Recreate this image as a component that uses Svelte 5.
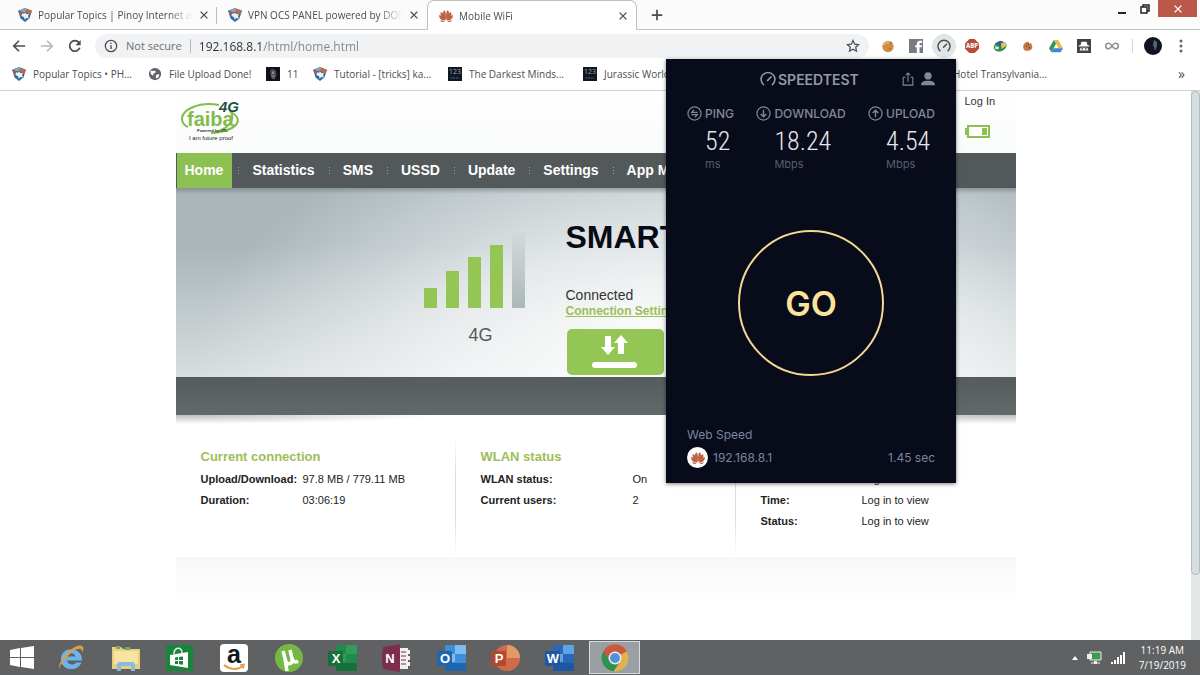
<script lang="ts">
    type Bookmark = { icon: string; label: string; width: number };

    let address = '192.168.8.1/html/home.html';

    const tabs = [
        { icon: 'cube', title: 'Popular Topics | Pinoy Internet and Technology', active: false },
        { icon: 'cube', title: 'VPN OCS PANEL powered by DOPE', active: false },
        { icon: 'huawei', title: 'Mobile WiFi', active: true },
    ];
    const extensions = ['cookie', 'facebook', 'gauge', 'abp', 'idm', 'cookiebite', 'drive', 'incognito', 'infinity'];
    const bookmarks: Bookmark[] = [
        { icon: 'cube', label: 'Popular Topics • PH...', width: 136 },
        { icon: 'globe', label: 'File Upload Done!', width: 118 },
        { icon: 'poster', label: '11', width: 47 },
        { icon: 'cube', label: 'Tutorial - [tricks] ka...', width: 135 },
        { icon: 'film', label: 'The Darkest Minds...', width: 135 },
        { icon: 'film', label: 'Jurassic World...', width: 349 },
        { icon: 'film', label: 'Hotel Transylvania...', width: 135 },
    ];
    const menu = ['Home', 'Statistics', 'SMS', 'USSD', 'Update', 'Settings', 'App Manager'];
    const bars = [20, 37, 51, 63, 76];
    const panels = [
        { title: 'Current connection', labelWidth: 102, rows: [['Upload/Download:', '97.8 MB / 779.11 MB'], ['Duration:', '03:06:19']] },
        { title: 'WLAN status', labelWidth: 152, rows: [['WLAN status:', 'On'], ['Current users:', '2']] },
        { title: 'Internet status', labelWidth: 101, rows: [['Network:', 'Log in to view'], ['Time:', 'Log in to view'], ['Status:', 'Log in to view']] },
    ];
    const results = [
        { icon: 'ping', label: 'PING', value: '52', unit: 'ms' },
        { icon: 'down', label: 'DOWNLOAD', value: '18.24', unit: 'Mbps' },
        { icon: 'up', label: 'UPLOAD', value: '4.54', unit: 'Mbps' },
    ];
    const apps = ['ie', 'explorer', 'store', 'amazon', 'utorrent', 'excel', 'onenote', 'outlook', 'powerpoint', 'word', 'chrome'];
    const office: Record<string, { letter: string; dark: string; mid: string; light: string }> = {
        excel: { letter: 'X', dark: '#17703c', mid: '#1f8c4c', light: '#2f9c5a' },
        onenote: { letter: 'N', dark: '#7b2f4c', mid: '#7b2f4c', light: '#f4f0f1' },
        outlook: { letter: 'O', dark: '#1f66ae', mid: '#3d8fd6', light: '#7dbdf0' },
        powerpoint: { letter: 'P', dark: '#b5472f', mid: '#cf6a4c', light: '#e39a62' },
        word: { letter: 'W', dark: '#1f56a3', mid: '#2b66b8', light: '#5ea3e2' },
    };
</script>

{#snippet icon(name: string, size = 14)}
    <svg width={size} height={size} viewBox="0 0 16 16" aria-hidden="true">
        {#if name === 'cube'}
            <path d="M0 3l8-3 8 3-3 9-5 4-5-4z" fill="#2f6ba6" />
            <path d="M1 3l7-3 3 2-4 3z" fill="#8fa3b5" />
            <path d="M9 1l7 2-2 4-5-2z" fill="#c96a30" />
            <path d="M4 6l3 .5L8 5l2 2 2.500-.5-1 3 1 2.500-3-.5-2 2-.5-3L4 9z" fill="#f3efe8" />
            <path d="M1 4l3.500 1v3L2 8z" fill="#c35a32" />
        {:else if name === 'huawei'}
            <g fill="#bd6243">
                <path d="M7.700 12.500C4 8 3.800 3.500 6 1.500 8 2.500 8.200 8 7.700 12.500z" />
                <path d="M8.300 12.500C12 8 12.200 3.500 10 1.500 8 2.500 7.800 8 8.300 12.500z" />
                <path d="M7.200 13C2.500 10.500 1 6.500 2.200 3.300 5 4 7 9 7.200 13z" />
                <path d="M8.800 13c4.700-2.500 6.200-6.500 5-9.700C11 4 9 9 8.800 13z" />
                <path d="M6.800 13.500C2 13.500-.2 10 .2 6.800 3.500 7.500 6 11 6.800 13.500z" />
                <path d="M9.200 13.500c4.800 0 7-3.500 6.600-6.700-3.300.7-5.800 4.200-6.600 6.700z" />
                <path d="M6.500 14c-2 1.500-4.500.8-5.300-1.200zM9.500 14c2 1.500 4.500.8 5.300-1.200z" />
            </g>
        {:else if name === 'globe'}
            <circle cx="8" cy="8" r="7" fill="#5f6368" />
            <path d="M3 4c2 0 3 1 5 0l1 2-3 2v2L3 8zM9 9l4-1-1 4-3 1z" fill="#fff" />
        {:else if name === 'poster'}
            <path d="M0 0h16v16H0z" fill="#101018" />
            <path d="M5 3l3-1 3 2 1 5-2 5H7L5 9z" fill="#554860" />
            <path d="M7 5h2v3H7zM6 10h4v1H6z" fill="#9c8b9e" />
        {:else if name === 'film'}
            <path d="M0 0h16v16H0z" fill="#111722" />
            <text x="8" y="8" text-anchor="middle" font-size="8" fill="#9aa5b5">123</text>
            <path d="M3 12.500h10" stroke="#66738a" stroke-dasharray="2 1" />
        {:else if name === 'cookie'}
            <circle cx="8" cy="8.500" r="6.500" fill="#cf8d45" />
            <path d="M3 7c1-3 4-4 7-3" fill="none" stroke="#e9b877" stroke-width="2" />
            <circle cx="11" cy="4" r="1" fill="#8b5a28" /><circle cx="10" cy="11" r="1" fill="#a96c31" />
        {:else if name === 'facebook'}
            <path d="M0 0h16v16H0z" fill="#777b84" />
            <path d="M9 16V9.500H7V7h2V5.500C9 3.200 10.400 2 12.500 2H15v2.500h-1.800c-.9 0-1.200.4-1.200 1.200V7h3l-.5 2.500H12V16z" fill="#fff" />
        {:else if name === 'gauge'}
            <path d="M4 14A6.900 6.900 0 1 1 12 14" fill="none" stroke="currentColor" stroke-width="1.600" />
            <path d="M7.500 9.500L11 6" stroke="currentColor" stroke-width="1.700" stroke-linecap="round" />
        {:else if name === 'abp'}
            <path d="M5 0h6l5 5v6l-5 5H5l-5-5V5z" fill="#b64c37" />
            <text x="8" y="10.500" text-anchor="middle" font-size="7" font-weight="700" fill="#fff">ABP</text>
        {:else if name === 'idm'}
            <ellipse cx="8" cy="8.500" rx="7.500" ry="5.500" fill="#2f8b50" transform="rotate(-20 8 8)" />
            <path d="M2 5l6-3 5 2-5 4z" fill="#315f9b" />
            <path d="M9 5l5-2 1 5-5 3z" fill="#e2c65a" />
            <path d="M3 8l4 1-1 3-4-1z" fill="#d8ecdf" />
        {:else if name === 'cookiebite'}
            <path d="M2.500 9c0-4 3-6 6-6l1 2.500 2-1 1.500 4c0 3.500-2.500 5-5.500 5s-5-1.500-5-4.500z" fill="#c57848" />
            <path d="M6 8h1M9 10h1M8 6h1" stroke="#6f391c" stroke-width="1.500" />
        {:else if name === 'drive'}
            <path d="M5.500 1h5L16 10.500h-5z" fill="#e9ba43" />
            <path d="M5.500 1L8 5.500 2.700 15 0 10.500z" fill="#2d9855" />
            <path d="M5.300 10.500H16L13.300 15H2.700z" fill="#4384d6" />
        {:else if name === 'incognito'}
            <path d="M0 0h16v16H0z" fill="#3f4347" />
            <path d="M5 3h6l1 4H4zM2 7h12v1.500H2zM4 10h8l1 3H3z" fill="#fff" />
            <path d="M5 10.500h2v1.500H5zM9 10.500h2v1.500H9z" fill="#3f4347" />
        {:else if name === 'infinity'}
            <path d="M8 8C6.500 6 5.500 4.800 4 4.800a3.200 3.200 0 0 0 0 6.400c1.500 0 2.500-1.200 4-3.200s2.500-3.200 4-3.200a3.200 3.200 0 0 1 0 6.400c-1.500 0-2.500-1.200-4-3.200z" fill="none" stroke="#8e9194" stroke-width="1.800" />
        {:else if name === 'back' || name === 'forward'}
            <path d={name === 'back' ? 'M15 8H2M8 2L2 8l6 6' : 'M1 8h13M8 2l6 6-6 6'} fill="none" stroke="currentColor" stroke-width="1.900" />
        {:else if name === 'reload'}
            <path d="M13.500 10A6 6 0 1 1 12.500 4" fill="none" stroke="currentColor" stroke-width="2" />
            <path d="M14.500 1v6h-6z" fill="currentColor" />
        {:else if name === 'info'}
            <circle cx="8" cy="8" r="6.500" fill="none" stroke="currentColor" stroke-width="1.400" />
            <path d="M8 7v4.500M8 4.300v1.500" stroke="currentColor" stroke-width="1.600" />
        {:else if name === 'star'}
            <path d="M8 1.800l1.900 4.100 4.500.5-3.300 3 .9 4.500L8 11.600l-4 2.300.9-4.500-3.300-3 4.500-.5z" fill="none" stroke="currentColor" stroke-width="1.400" />
        {:else if name === 'close'}
            <path d="M3.500 3.500l9 9M12.500 3.500l-9 9" stroke="currentColor" stroke-width="1.800" />
        {:else if name === 'plus'}
            <path d="M8 2v12M2 8h12" stroke="currentColor" stroke-width="2" />
        {:else if name === 'share'}
            <path d="M5 6H2.500v9h11V6H11M8 11V1M5.500 3.500L8 1l2.500 2.500" fill="none" stroke="currentColor" stroke-width="1.200" />
        {:else if name === 'user'}
            <circle cx="8" cy="4.500" r="4.200" fill="currentColor" />
            <path d="M0 15c0-3.500 2.500-5 8-5s8 1.500 8 5z" fill="currentColor" />
        {:else if name === 'ping' || name === 'down' || name === 'up'}
            <circle cx="8" cy="8" r="7" fill="none" stroke="currentColor" stroke-width="1.300" />
            {#if name === 'ping'}
                <path d="M11.500 6.700H5L7.500 4M4.500 9.300H11L8.500 12" fill="none" stroke="currentColor" stroke-width="1.300" />
            {:else}
                <path d={name === 'down' ? 'M8 4v7.500M5 8.500l3 3 3-3' : 'M8 12V4.500M5 7.500l3-3 3 3'} fill="none" stroke="currentColor" stroke-width="1.500" />
            {/if}
        {/if}
    </svg>
{/snippet}

{#snippet appIcon(name: string)}
    <svg width="30" height="30" viewBox="0 0 30 30" aria-hidden="true">
        {#if name === 'ie'}
            <path d="M26 17.500H11c.5 4.500 7 5.500 9 2h5.500C22 29 5 28.500 5 16S24 3 26 15z" fill="#6bb5ea" />
            <path d="M11 13.500h8.500c-.5-4.500-8-4.500-8.500 0z" fill="#5f6162" />
            <path d="M4 27C-2 20 22-4 27 4c1 2 0 4-1 5 0-6-8-3-14 4S2 24 4 27z" fill="#dba045" />
        {:else if name === 'explorer'}
            <path d="M1 4h9l2 2h17v20H1z" fill="#e9cf7d" />
            <path d="M5 3h4v3H5zM14 4h5v3h-5z" fill="#78a95c" />
            <path d="M3 8h24v13H3z" fill="#f6e4a0" />
            <path d="M6 28v-6c0-2 1-3 3-3h12c2 0 3 1 3 3v6h-4v-5H10v5z" fill="#87bce0" />
        {:else if name === 'store'}
            <path d="M1 2h27v26H1z" fill="#17853a" />
            <path d="M5 12l18-3v16L5 22z" fill="#fff" />
            <path d="M9 11c0-7 8-8 8-1" fill="none" stroke="#d6efdc" stroke-width="1.500" />
            <path d="M10 14.500l3-.4v3h-3zM14 14l4-.5v3.600h-4zM10 18h3v3h-3zM14 18h4v3.800l-4-.5z" fill="#17853a" />
        {:else if name === 'amazon'}
            <rect x="1" y="1" width="28" height="28" rx="4" fill="#fff" />
            <text x="15" y="20" text-anchor="middle" font-size="25" font-weight="700" fill="#101820">a</text>
            <path d="M5 22c6 5 14 5 19 1" fill="none" stroke="#e39a43" stroke-width="2" />
            <path d="M21 22l4-.5-1 4" fill="none" stroke="#e39a43" stroke-width="1.500" />
        {:else if name === 'utorrent'}
            <circle cx="15" cy="15" r="14" fill="#75b944" />
            <path d="M9 8l3 11c2 3 7 2 6-3L16 7M18 15c1 4 3 5 6 3M11 16l2 12" fill="none" stroke="#fff" stroke-width="3.500" />
        {:else if name === 'chrome'}
            <circle cx="15" cy="15" r="13.500" fill="#e0b24d" />
            <path d="M15 15L3.300 8.200A13.500 13.500 0 0 1 26.700 8.200z" fill="#c8583e" />
            <path d="M15 15L3.300 8.200A13.500 13.500 0 0 0 13.500 28.400L19 20z" fill="#2f9150" />
            <path d="M15 8.500h11.800A13.500 13.500 0 0 0 3.300 8.200L9 17z" fill="#c8583e" />
            <circle cx="15" cy="15" r="6.500" fill="#f2f2f2" />
            <circle cx="15" cy="15" r="5" fill="#4d92dc" />
        {:else}
            {@const o = office[name]}
            {#if name === 'powerpoint'}
                <circle cx="16" cy="15" r="13" fill={o.mid} />
                <path d="M16 15V2a13 13 0 0 1 13 13z" fill={o.light} />
            {:else if name === 'onenote'}
                <rect x="14" y="5" width="12" height="21" fill={o.light} />
                <path d="M19 9h5M19 13h5M19 17h5M19 21h5" stroke={o.dark} stroke-width="1.200" />
                <path d="M26 7h2v4h-2zM26 13h2v4h-2zM26 19h2v4h-2z" fill={o.light} />
                <path d="M1 4l17-3v28L1 26z" fill={o.dark} />
            {:else}
                <rect x="8" y="2" width="21" height="26" rx="1" fill={o.mid} />
                <path d="M18 2h11v9H18zM8 11h10v8H8z" fill={o.light} />
                <path d="M8 20h21v8H8z" fill={o.dark} />
            {/if}
            <rect x="0" y="8" width="15" height="15" rx="1" fill={o.dark} />
            <text x="8" y="20" text-anchor="middle" font-size="13" font-weight="700" fill="#fff">{o.letter}</text>
        {/if}
    </svg>
{/snippet}

<div class="screen">
    <header class="browser">
        <div class="tabstrip">
            {#each tabs as t}
                <div class="tab" class:active={t.active}>
                    {@render icon(t.icon)}
                    <span class="tab-title">{t.title}</span>
                    <button class="plain" aria-label="Close tab">{@render icon('close', 12)}</button>
                </div>
            {/each}
            <button class="plain newtab" aria-label="New tab">{@render icon('plus')}</button>
            <div class="window-btns">
                <button class="plain" aria-label="Minimize"><svg width="10" height="12"><path d="M1 10h8" stroke="#222" stroke-width="2" /></svg></button>
                <button class="plain" aria-label="Restore"><svg width="10" height="12"><path d="M1 4h6v6H1zM3 4V2h6v6H7" fill="none" stroke="#222" stroke-width="1.500" /></svg></button>
                <button class="plain quit" aria-label="Close">{@render icon('close', 12)}</button>
            </div>
        </div>

        <div class="toolbar">
            <button class="plain tool" aria-label="Back">{@render icon('back')}</button>
            <button class="plain tool dim" aria-label="Forward">{@render icon('forward')}</button>
            <button class="plain tool" aria-label="Reload">{@render icon('reload')}</button>
            <div class="omnibox">
                {@render icon('info')}
                <span class="secure">Not secure</span>
                <input class="url" type="text" aria-label="Address" bind:value={address} />
                <button class="plain" aria-label="Bookmark this page">{@render icon('star')}</button>
            </div>
            {#each extensions as e}
                <button class="plain tool" class:pressed={e === 'gauge'} aria-label={e}>{@render icon(e)}</button>
            {/each}
            <span class="divider"></span>
            <button class="plain tool" aria-label="Profile">
                <svg width="18" height="18"><circle cx="9" cy="9" r="9" fill="#10141f" /><path d="M10 3l3 2v4l-2 5-1-4-1-2z" fill="#5b6373" /></svg>
            </button>
            <button class="plain tool" aria-label="Menu">
                <svg width="4" height="14" fill="#5f6368"><circle cx="2" cy="2" r="1.500" /><circle cx="2" cy="7" r="1.500" /><circle cx="2" cy="12" r="1.500" /></svg>
            </button>
        </div>

        <nav class="bookmarks">
            {#each bookmarks as b}
                <a href="#bookmark" style="width: {b.width}px">{@render icon(b.icon)}{b.label}</a>
            {/each}
            <button class="plain more" aria-label="More bookmarks">»</button>
        </nav>
    </header>

    <div class="viewport">
        <main class="page">
            <div class="masthead">
                <svg class="logo" width="60" height="42" viewBox="0 0 60 42" role="img" aria-label="Faiba 4G">
                    <path d="M38 4C18 0 0 9 1 19c1 4 3 6 6 7M50 11c14 8 6 19-20 21 14-2 25-11 20-21z" fill="none" stroke="#83bc4b" stroke-width="2" />
                    <text x="6" y="25" font-size="20" font-weight="700" fill="#83bc4b">faiba</text>
                    <text x="38" y="11" font-size="15" font-weight="700" font-style="italic" fill="#1f5240">4G</text>
                    <text x="16" y="31" font-size="4" font-weight="700" fill="#333">Powered by JTL</text>
                    <text x="8" y="39" font-size="6" fill="#222">I am future proof</text>
                </svg>
                <div class="account">
                    <a href="#login">Log In</a>
                    <svg width="26" height="15" role="img" aria-label="Battery">
                        <path d="M0 4h3v7H0z" fill="#8fc04f" />
                        <path d="M3 2h21v11H3z" fill="#fff" stroke="#8fc04f" stroke-width="2" />
                        <path d="M17 4h5v7h-5z" fill="#8fc04f" />
                    </svg>
                </div>
            </div>

            <nav class="menu">
                {#each menu as m, i}
                    {#if i > 0}<span class="dots"></span>{/if}
                    <a href="#{m}" class:current={i === 0}>{m}</a>
                {/each}
            </nav>

            <section class="hero">
                <div class="signal">
                    <div class="bars">
                        {#each bars as h, i}
                            <span class:off={i === 4} style="height: {h}px"></span>
                        {/each}
                    </div>
                    <p class="mode">4G</p>
                </div>
                <div class="operator">
                    <h1>SMART</h1>
                    <p>Connected</p>
                    <a href="#settings">Connection Settings</a>
                    <button class="data" aria-label="Mobile data">
                        <svg width="46" height="34" fill="#fff">
                            <path d="M12 1h6v11h4l-7 8-7-8h4zM25 19V8h-4l7-8 7 8h-4v11z" transform="translate(1 0)" />
                            <rect x="0" y="27" width="45" height="6" rx="3" />
                        </svg>
                    </button>
                </div>
            </section>
            <div class="band"></div>

            <section class="panels">
                {#each panels as p}
                    <div class="panel">
                        <h2>{p.title}</h2>
                        <dl style="grid-template-columns: {p.labelWidth}px 1fr">
                            {#each p.rows as [label, value]}
                                <dt>{label}</dt>
                                <dd>{value}</dd>
                            {/each}
                        </dl>
                    </div>
                {/each}
            </section>
            <div class="fade"></div>
        </main>
        <div class="scroll"><div class="thumb"></div></div>
    </div>

    <aside class="popup">
        <div class="brand">
            <span class="name">{@render icon('gauge', 16)}SPEEDTEST</span>
            <button class="plain" aria-label="Share">{@render icon('share')}</button>
            <button class="plain" aria-label="Account">{@render icon('user')}</button>
        </div>
        <div class="results">
            {#each results as r}
                <div class="result">
                    {@render icon(r.icon, 15)}
                    <span class="label">{r.label}</span>
                    <span class="value">{r.value}</span>
                    <span class="unit">{r.unit}</span>
                </div>
            {/each}
        </div>
        <button class="go">GO</button>
        <p class="web">Web Speed</p>
        <div class="host">
            <span class="badge">{@render icon('huawei')}</span>
            <span>192.168.8.1</span>
            <span class="time">1.45 sec</span>
        </div>
    </aside>

    <footer class="taskbar">
        <button class="plain start" aria-label="Start">
            <svg width="24" height="24" fill="#fff"><path d="M0 4l10-2v9H0zM11 2l13-2v11H11zM0 12h10v9L0 19zM11 12h13v11l-13-2z" /></svg>
        </button>
        <div class="apps">
            {#each apps as a}
                <button class="plain" class:running={a === 'chrome'} aria-label={a}>{@render appIcon(a)}</button>
            {/each}
        </div>
        <div class="tray">
            <svg width="6" height="4"><path d="M0 4l3-4 3 4z" fill="#fff" /></svg>
            <svg width="15" height="13"><path d="M3 1h11v8H3z" fill="#3f9c46" stroke="#eee" /><path d="M0 3h5v5H0zM7 10h3v3H7z" fill="#eee" /><path d="M4 12h9" stroke="#eee" /></svg>
            <svg width="14" height="12" fill="#fff"><path d="M0 10h2v2H0zM3 8h2v4H3zM6 5h2v7H6zM9 3h2v9H9zM12 0h2v12h-2z" /></svg>
            <div class="clock">11:19 AM<br />7/19/2019</div>
        </div>
    </footer>
</div>

<style>
    :global(body) { margin: 0; background: #fff; }
    .screen { position: relative; display: flex; flex-direction: column; min-height: 100vh; font-family: 'Liberation Sans', Arial, sans-serif; overflow: hidden; }
    svg { display: block; flex: none; }
    p, h1, h2, dl, dd { margin: 0; }
    .plain { display: flex; align-items: center; justify-content: center; padding: 0; border: 0; background: none; color: inherit; font: inherit; cursor: pointer; }

    .browser { font-family: 'Open Sans', 'Noto Sans', sans-serif; font-size: 10px; color: #4a4d51; border-bottom: 1px solid #cfd1d1; }
    .tabstrip { display: flex; height: 30px; box-sizing: border-box; padding-left: 7px; background: linear-gradient(#b9c6c0, #b9c6c0) bottom / 100% 1px no-repeat #fafbfa; }
    .tab { display: flex; align-items: center; gap: 6px; flex: 0 1 210px; box-sizing: border-box; min-width: 0; padding: 0 7px 0 11px; }
    .tab:first-child { background: linear-gradient(#b3c2bd, #b3c2bd) right / 1px 17px no-repeat; }
    .tab.active { background: #fff; border: 1px solid #b9c6c0; border-bottom: 0; border-radius: 7px 7px 0 0; }
    .tab-title { flex: 1; overflow: hidden; white-space: nowrap; mask-image: linear-gradient(to right, #000 85%, transparent); }
    .newtab { width: 40px; }
    .window-btns { display: flex; align-items: flex-start; gap: 13px; margin-left: auto; padding-right: 3px; }
    .window-btns .plain { height: 17px; }
    .window-btns .quit { width: 39px; margin-left: -5px; background: #ba5949; color: #fff; }

    .toolbar { display: flex; align-items: center; height: 32px; padding: 0 5px; background: #fff; }
    .tool { width: 28px; height: 24px; flex: none; }
    .tool.dim { color: #b5b9bc; }
    .tool.pressed { background: radial-gradient(circle, #e0e5e6 12px, transparent 12px); }
    .omnibox { display: flex; align-items: center; gap: 8px; flex: 1; height: 24px; margin: 0 5px 0 6px; padding: 0 9px; border-radius: 12px; background: #f0f2f3; font-size: 11px; }
    .secure { padding-right: 8px; border-right: 1px solid #b5b8ba; line-height: 14px; color: #6c7074; }
    .url { flex: 1; min-width: 0; padding: 0; border: 0; outline: 0; font: inherit; font-size: 12px; background: linear-gradient(to right, #2b2e31 62px, #80868b 62px) text; color: transparent; caret-color: #2b2e31; }
    .divider { width: 1px; height: 14px; margin: 0 6px; background: #d3d7d8; }

    .bookmarks { display: flex; align-items: center; height: 28px; box-sizing: border-box; padding: 0 12px 5px; background: #fff; overflow: hidden; }
    .bookmarks a { display: flex; align-items: center; gap: 7px; flex: none; color: inherit; text-decoration: none; white-space: nowrap; }
    .more { margin-left: auto; padding-right: 3px; font-size: 14px; }

    .viewport { display: flex; flex: 1; background: #fff; }
    .page { width: 840px; margin: 0 auto; }
    .scroll { flex: none; width: 9px; background: #e4e7e7; }
    .thumb { height: 484px; box-sizing: border-box; border: 1px solid #b0bcbd; border-radius: 4px; background: #d5dede; }

    .masthead { display: flex; justify-content: space-between; height: 62px; box-sizing: border-box; padding: 10px 0 0 5px; background: linear-gradient(#fff, #fafbfb); }
    .account { display: flex; flex-direction: column; gap: 17px; width: 51px; margin-top: -6px; font-size: 11px; line-height: 12px; }
    .account a { color: #333; text-decoration: none; }

    .menu { display: flex; align-items: center; height: 35px; padding-left: 1px; background: #53595b; overflow: hidden; }
    .menu a { padding: 0 8px; font-size: 14px; font-weight: 700; line-height: 35px; color: #fff; text-decoration: none; white-space: nowrap; }
    .menu a.current { padding-right: 9px; background: #8cc152; }
    .dots { width: 1px; height: 7px; margin: 0 5px 0 6px; background: repeating-linear-gradient(#9aa0a2 0 1px, transparent 1px 3px); }

    .hero { display: flex; height: 189px; box-sizing: border-box; padding: 31px 0 0 248px; background: linear-gradient(rgba(90, 100, 105, 0.45), transparent 6px), linear-gradient(transparent 30%, rgba(255, 255, 255, 0.55)), radial-gradient(ellipse 500px 260px at 520px 170px, #f7f8f8 15%, #dfe4e6 50%, #a9b5b9 100%); }
    .signal { width: 142px; padding-top: 13px; }
    .bars { display: flex; align-items: flex-end; gap: 9px; }
    .bars span { width: 13px; background: #93c655; }
    .bars .off { background: linear-gradient(#d4dadb, #acb7ba); }
    .mode { padding: 16px 0 0 45px; font-size: 18px; line-height: 22px; color: #55595b; }
    .operator { display: flex; flex-direction: column; align-items: flex-start; color: #333; }
    .operator h1 { font-size: 32px; line-height: 36px; color: #080a14; }
    .operator p { padding-top: 32px; font-size: 14px; line-height: 16px; }
    .operator a { font-size: 12px; font-weight: 700; line-height: 16px; color: #9dbe58; }
    .data { display: flex; align-items: center; justify-content: center; width: 97px; height: 46px; margin: 10px 0 0 1px; border: 0; border-radius: 5px; background: #93c655; cursor: pointer; }
    .band { height: 38px; background: linear-gradient(#565c5d, #636969); }

    .panels { display: grid; grid-template-columns: repeat(3, 1fr); height: 142px; background: radial-gradient(ellipse 260px 9px at 0 0, #b9bfc0, transparent) no-repeat, radial-gradient(ellipse 260px 9px at 100% 0, #b9bfc0, transparent) no-repeat; }
    .panel { padding: 32px 0 0 25px; background: linear-gradient(transparent, #dcdede 30% 70%, transparent) right 21px / 1px 120px no-repeat; }
    .panel:last-child { background: none; }
    .panel h2 { font-size: 13px; line-height: 20px; color: #9dbe58; }
    .panel dl { display: grid; padding-top: 2px; font-size: 11px; line-height: 21px; color: #222; }
    .panel dt { font-weight: 700; }
    .fade { height: 43px; background: linear-gradient(#f7f7f7, #fff); }

    /* extension popup hangs off the toolbar, over the page */
    .popup { position: absolute; top: 59px; right: 244px; display: flex; flex-direction: column; width: 290px; height: 424px; box-sizing: border-box; padding: 11px 21px 0; background: #080b19; color: #85879a; font-family: Inter, Lato, sans-serif; font-size: 12px; box-shadow: 0 1px 4px rgba(0, 0, 0, 0.5); }
    .brand { display: flex; align-items: center; gap: 6px; height: 18px; }
    .name { display: flex; align-items: center; gap: 2px; margin: 0 auto 0 73px; font-size: 14px; font-weight: 600; color: #9698a6; }
    .results { display: flex; justify-content: space-between; padding-top: 18px; }
    .result { display: grid; grid-template-columns: 15px auto; column-gap: 3px; }
    .result .label { font-weight: 500; line-height: 15px; }
    .result .value, .result .unit { grid-column: 2; }
    .result .value { padding-top: 3px; font-family: 'Roboto Condensed', 'Open Sans Condensed', Roboto, sans-serif; font-size: 26px; font-weight: 300; line-height: 34px; color: #e6e7ec; }
    .result .unit { font-size: 11px; line-height: 12px; color: #5b5d6e; }
    .go { align-self: center; width: 146px; height: 146px; margin-top: 60px; border: 2px solid #f3d795; border-radius: 50%; background: none; color: #fbe39c; font: 600 34px Inter, sans-serif; cursor: pointer; }
    .web { margin-top: 51px; line-height: 16px; color: #7986a0; }
    .host { display: flex; align-items: center; gap: 5px; padding-top: 4px; color: #7986a0; }
    .badge { display: flex; align-items: center; justify-content: center; width: 21px; height: 21px; border-radius: 50%; background: #fff; }
    .time { margin-left: auto; }

    .taskbar { display: flex; align-items: center; height: 35px; background: #5f6162; color: #fff; }
    .start { width: 44px; }
    .apps { display: grid; grid-template-columns: repeat(11, 1fr); justify-items: center; width: 598px; }
    .apps .plain { width: 51px; height: 33px; box-sizing: border-box; }
    .apps .running { border: 1px solid #d8dcde; background: #9a9fa5; }
    .tray { display: flex; align-items: center; gap: 9px; margin-left: auto; padding-right: 14px; }
    .clock { padding-left: 5px; font: 10px/15px 'Open Sans', 'Noto Sans', sans-serif; text-align: center; }
</style>
